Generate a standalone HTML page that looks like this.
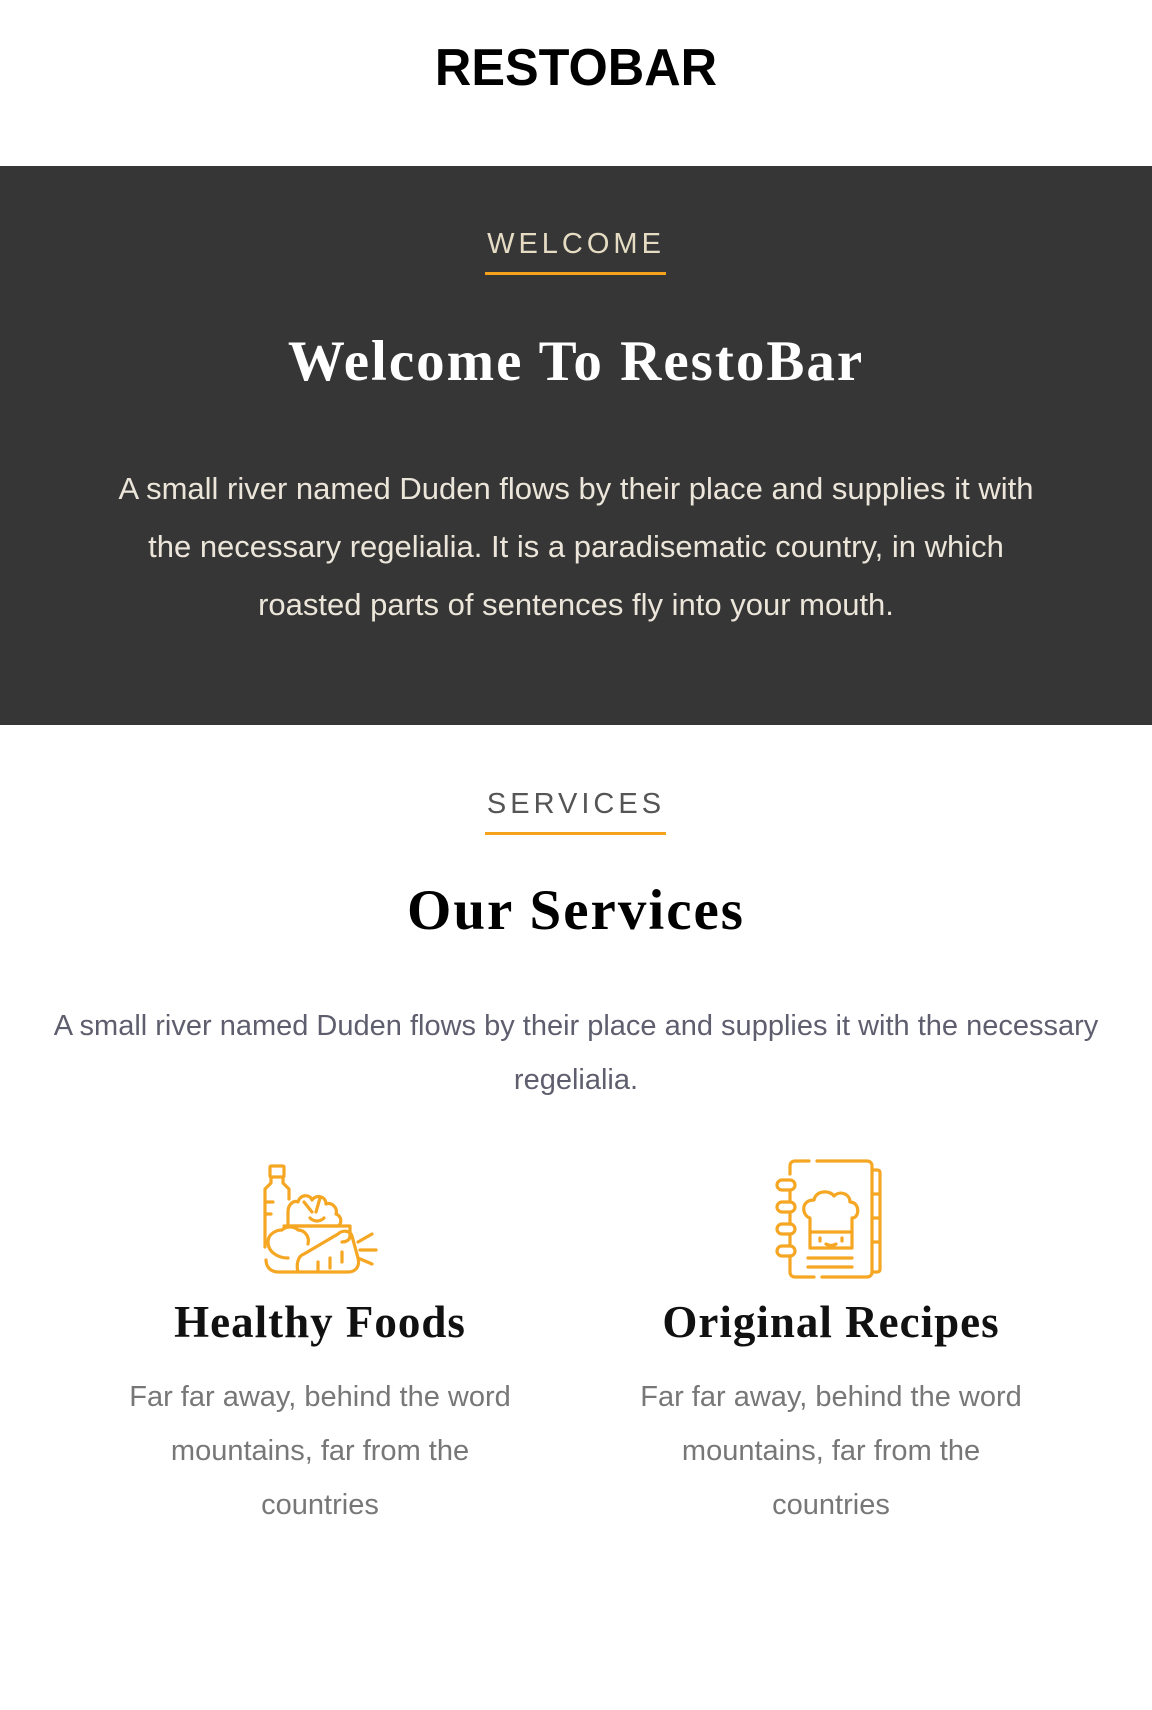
<!DOCTYPE html>
<html><head><meta charset="utf-8"><style>
*{margin:0;padding:0;box-sizing:border-box}
body{width:1152px;height:1710px;background:#fff;font-family:"Liberation Sans",sans-serif;position:relative;overflow:hidden}
.abs{position:absolute;left:0;width:1152px;text-align:center}
.logo{top:38px;font-weight:bold;font-size:52px;color:#000;transform:scaleX(.97)}
.band{position:absolute;top:166px;left:0;width:1152px;height:559px;background:#363636}
.kicker{font-size:29px;letter-spacing:4px;font-weight:300}
.uline{position:absolute;height:3px;background:#f5a21c;left:485px;width:181px}
.h{font-family:"Liberation Serif",serif;font-weight:bold}
.col{position:absolute;width:480px;text-align:center}
.col h3{font-family:"Liberation Serif",serif;font-weight:bold;font-size:45px;letter-spacing:1px;color:#111;position:absolute;top:-2px;width:100%}
.col p{position:absolute;top:72px;width:100%;font-size:29px;line-height:54px;color:#777;padding:0 32px}
</style></head><body>
<div class="abs logo">RESTOBAR</div>
<div class="band"></div>
<div class="abs kicker" style="top:228px;color:#e6dcc4">WELCOME</div>
<div class="uline" style="top:272px"></div>
<div class="abs h" style="top:329px;font-size:57px;letter-spacing:2px;color:#fff">Welcome To RestoBar</div>
<div class="abs" style="top:460px;color:#ece6da;padding:0 108px;font-size:31px;line-height:58px">A small river named Duden flows by their place and supplies it with the necessary regelialia. It is a paradisematic country, in which roasted parts of sentences fly into your mouth.</div>
<div class="abs kicker" style="top:788px;color:#555">SERVICES</div>
<div class="uline" style="top:832px"></div>
<div class="abs h" style="top:878px;font-size:57px;letter-spacing:2px;color:#000">Our Services</div>
<div class="abs" style="top:999px;font-size:29px;line-height:54px;color:#5e5e6e;padding:0 20px">A small river named Duden flows by their place and supplies it with the necessary regelialia.</div>

<svg style="position:absolute;left:258px;top:1162px" width="124" height="114" viewBox="0 0 124 114" fill="none" stroke="#f5a623" stroke-width="3.2" stroke-linecap="round" stroke-linejoin="round">
<rect x="12" y="4" width="14" height="11" rx="1"/>
<path d="M13 15v6l-6 6v58M25 15v6l6 6v10"/>
<path d="M7 40h8M7 52h6"/>
<path d="M30 50c0-8 6-12 10-10 2-8 12-8 14-2 4-6 14-4 14 4 6-2 12 4 10 10 6 2 6 10 2 12H30z"/>
<path d="M46 40l8 10M62 36l-4 14M52 56c4 4 10 4 14 0"/>
<path d="M26 64h66v10c0 4-4 6-8 6"/>
<path d="M30 96c-10 0-20-6-20-16 0-8 8-12 14-12 4-4 12-4 16 0 6 0 12 6 10 14"/>
<path d="M40 110H20c-8 0-12-6-12-12"/>
<path d="M40 110h50c8 0 12-6 10-14l-6-22c-2-6-10-6-14-2L46 92c-6 2-8 10-6 18z"/>
<path d="M100 80l14-8M102 88l16 0M100 96l14 6"/>
<path d="M60 100v8M72 96v10M84 90v10"/>
</svg>

<svg style="position:absolute;left:772px;top:1158px" width="118" height="122" viewBox="0 0 118 122" fill="none" stroke="#f5a623" stroke-width="3.2" stroke-linecap="round" stroke-linejoin="round">
<path d="M18 16V8c0-3 2-5 5-5h14M45 3h50c3 0 5 2 5 5v106c0 3-2 5-5 5H50M42 119H23c-3 0-5-2-5-5v-8"/>
<path d="M100 12h5c2 0 3 1 3 3v96c0 2-1 3-3 3h-5M100 36h8M100 60h8M100 84h8"/>
<rect x="5" y="22" width="18" height="10" rx="5"/><rect x="5" y="44" width="18" height="10" rx="5"/><rect x="5" y="66" width="18" height="10" rx="5"/><rect x="5" y="88" width="18" height="10" rx="5"/>
<path d="M18 32v12M18 54v12M18 76v12M18 98v8"/>
<path d="M38 60c-8-2-10-18 4-18 2-10 16-10 20-4 6-6 16-2 16 6 10 0 10 16 2 16v30H38z"/>
<path d="M38 74h42M48 80v3M70 80v3M54 86c3 2 7 2 10 0"/>
<path d="M36 100h44M36 109h44"/>
</svg>

<div class="col" style="left:80px;top:1298px"><h3>Healthy Foods</h3><p>Far far away, behind the word mountains, far from the countries</p></div>
<div class="col" style="left:591px;top:1298px"><h3>Original Recipes</h3><p>Far far away, behind the word mountains, far from the countries</p></div>
</body></html>
